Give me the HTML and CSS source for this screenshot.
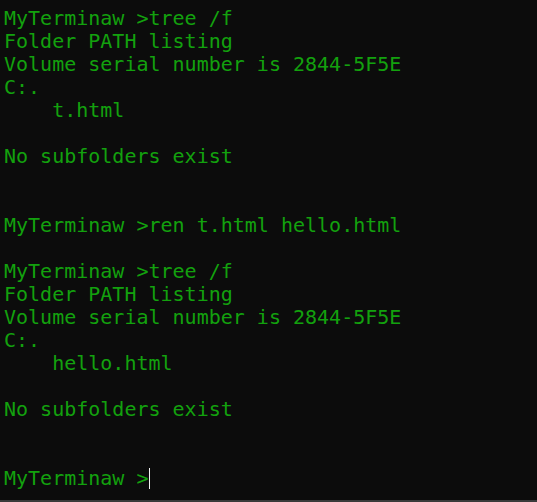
FILE: index.html
```html
<!DOCTYPE html>
<html>
<head>
<meta charset="utf-8">
<link rel="stylesheet" href="styles.css">
</head>
<body>
<div class="terminal">
<pre class="output">MyTerminaw >tree /f
Folder PATH listing
Volume serial number is 2844-5F5E
C:.
    t.html

No subfolders exist


MyTerminaw >ren t.html hello.html

MyTerminaw >tree /f
Folder PATH listing
Volume serial number is 2844-5F5E
C:.
    hello.html

No subfolders exist


MyTerminaw ><span class="cursor"></span></pre>
</div>
</body>
</html>
```
FILE: styles.css
```css
html, body {
  margin: 0;
  padding: 0;
  background: #0c0c0c;
  height: 100%;
}
.terminal {
  box-sizing: border-box;
  height: 502px;
  padding: 7px 0 0 4px;
  border-bottom: 2px solid #3a3a3a;
  overflow: hidden;
}
.output {
  margin: 0;
  font-family: "DejaVu Sans Mono", monospace;
  font-size: 20px;
  line-height: 23px;
  color: #13a10e;
  white-space: pre;
}
.cursor {
  display: inline-block;
  width: 1px;
  height: 21px;
  background: #f2f2f2;
  vertical-align: -4px;
}
```
